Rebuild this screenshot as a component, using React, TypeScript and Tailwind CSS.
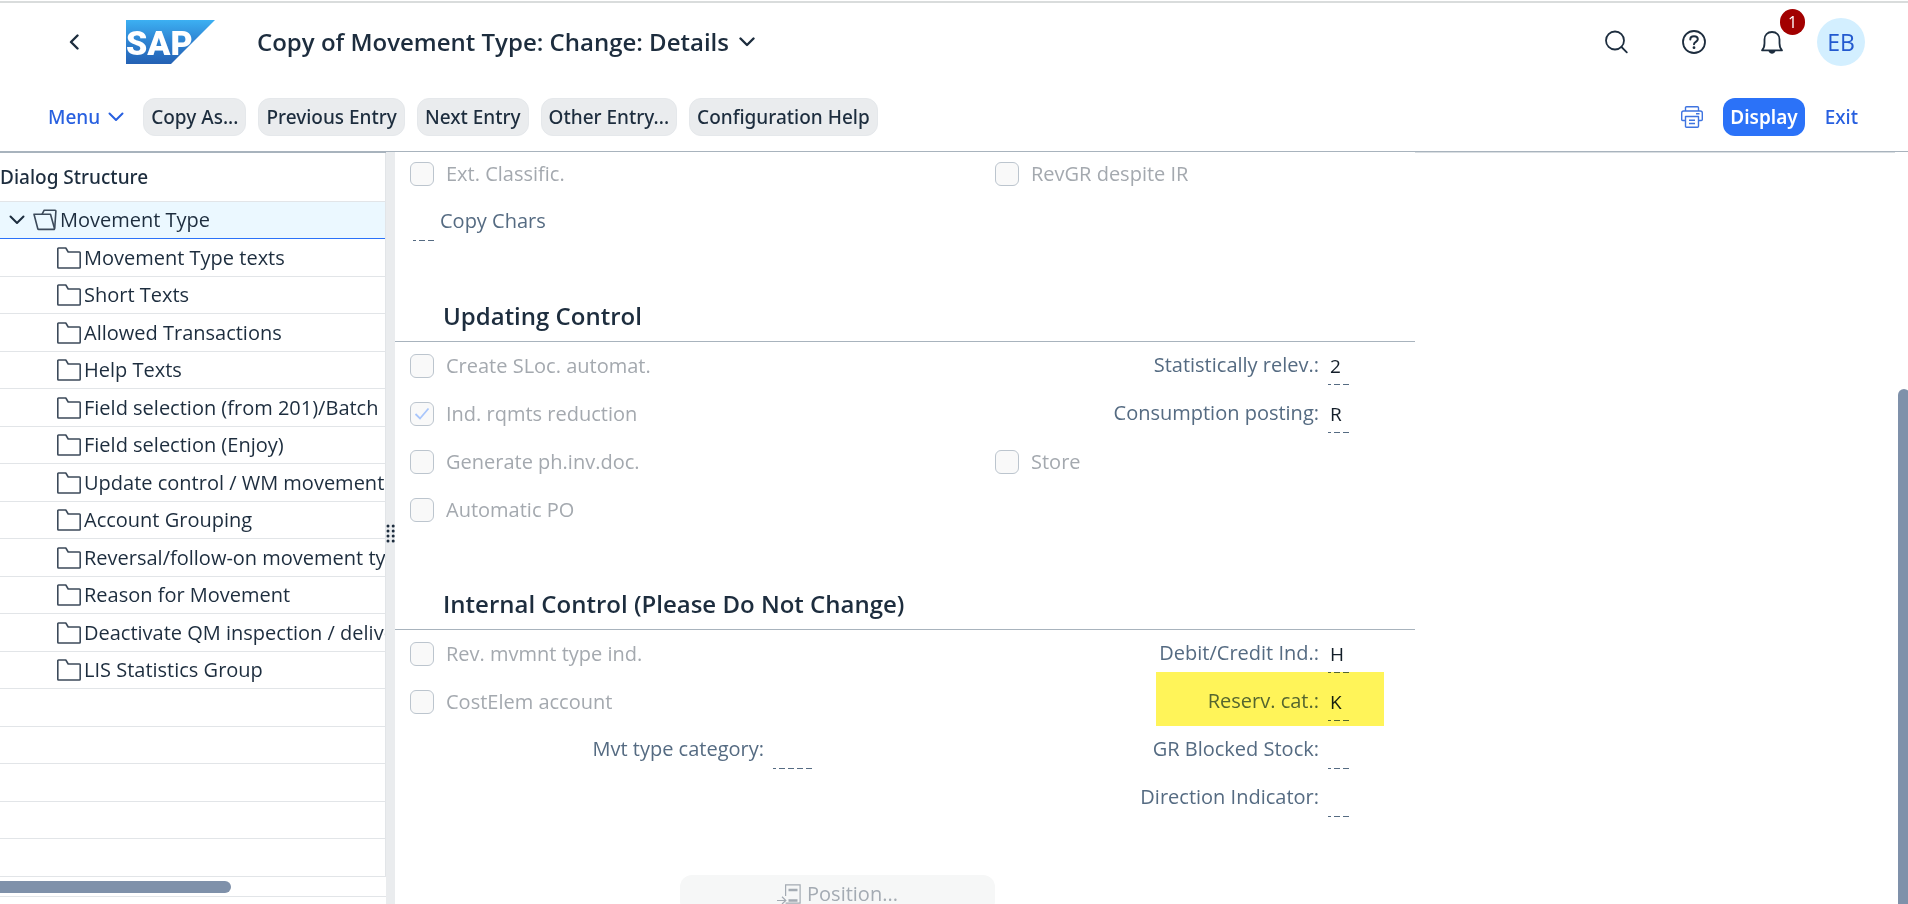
import React, { useState } from 'react';

const TREE_ITEMS = [
  'Movement Type texts',
  'Short Texts',
  'Allowed Transactions',
  'Help Texts',
  'Field selection (from 201)/Batch',
  'Field selection (Enjoy)',
  'Update control / WM movement types',
  'Account Grouping',
  'Reversal/follow-on movement types',
  'Reason for Movement',
  'Deactivate QM inspection / delivery category',
  'LIS Statistics Group',
];

const ACTIONS = ['Copy As...', 'Previous Entry', 'Next Entry', 'Other Entry...', 'Configuration Help'];

function ChevronDown({ className, thick = 2 }: { className: string; thick?: number }) {
  return (
    <svg viewBox="0 0 16 10" className={className} fill="none" stroke="currentColor" strokeWidth={thick} strokeLinecap="round" strokeLinejoin="round">
      <path d="M1.5 1.5 8 8l6.5-6.5" />
    </svg>
  );
}

function SapLogo() {
  return (
    <svg viewBox="0 0 89 44" className="w-[89px] h-11" role="img" aria-label="SAP">
      <defs>
        <linearGradient id="sapBlue" x1="0" y1="0" x2="0" y2="1">
          <stop offset="0" stopColor="#3cb0f2" />
          <stop offset="0.45" stopColor="#2f86d4" />
          <stop offset="1" stopColor="#2461b4" />
        </linearGradient>
      </defs>
      <path d="M0 0h89L45 44H0z" fill="url(#sapBlue)" />
      <text x="0" y="35" fill="#fff" fontFamily="Roboto, sans-serif" fontWeight="900" fontSize="34">SAP</text>
    </svg>
  );
}

function SearchIcon() {
  return (
    <svg viewBox="0 0 24 24" className="w-6 h-6" fill="none" stroke="currentColor" strokeWidth="1.8" strokeLinecap="round">
      <circle cx="11" cy="10.5" r="9" />
      <path d="m17.5 17 5.3 5.3" />
    </svg>
  );
}

function HelpIcon() {
  return (
    <svg viewBox="0 0 24 24" className="w-6 h-6" fill="none" stroke="currentColor" strokeWidth="1.8" strokeLinecap="round" strokeLinejoin="round">
      <circle cx="12" cy="12" r="11" />
      <path d="M8.3 9.4c0-2 1.6-3.2 3.7-3.2s3.8 1.2 3.8 3c0 2.7-3.8 2.5-3.8 5" strokeWidth="2" />
      <circle cx="12" cy="17.7" r="1.4" fill="currentColor" stroke="none" />
    </svg>
  );
}

function BellIcon() {
  return (
    <svg viewBox="0 0 24 24" className="w-6 h-6" fill="none" stroke="currentColor" strokeWidth="1.8" strokeLinejoin="round" strokeLinecap="round">
      <path d="M2 20.3c1.9-1.9 2.5-4 2.5-7V9.5C4.5 5 7.5 2 12 2s7.5 3 7.5 7.5v3.8c0 3 .6 5.1 2.5 7z" />
      <path d="M8.5 21c.7 2 2 2.7 3.5 2.7s2.8-.7 3.5-2.7z" fill="currentColor" stroke="none" />
    </svg>
  );
}

function PrinterIcon() {
  return (
    <svg viewBox="0 0 22 22" className="w-[22px] h-[22px]" fill="none" stroke="currentColor" strokeWidth="1.4" strokeLinejoin="round">
      <path d="M4.5 5V1.7c0-.6.4-1 1-1h11c.6 0 1 .4 1 1V5" />
      <path d="M4.5 14.5H1.7c-.6 0-1-.4-1-1V7c0-1.1.9-2 2-2h16.600c1.1 0 2 .9 2 2v6.5c0 .6-.4 1-1 1h-2.8" />
      <path d="M4.5 10.5h13v9.8c0 .6-.4 1-1 1h-11c-.6 0-1-.4-1-1z" />
      <path d="M8 14.3h6M8 17.5h6M15 7.7h3.5" />
    </svg>
  );
}

function FolderIcon() {
  return (
    <svg viewBox="0 0 24 22" className="w-6 h-[22px] shrink-0 text-[#3c4a5a]" fill="none" stroke="currentColor" strokeWidth="1.6" strokeLinejoin="round">
      <path d="M.8 1.8c0-.4.3-.8.8-.8h7.2l2.4 4h11.2c.4 0 .8.3.8.7v14.6c0 .4-.4.7-.8.7H1.6c-.5 0-.8-.3-.8-.7z" />
    </svg>
  );
}

function OpenFolderIcon() {
  return (
    <svg viewBox="0 0 24 22" className="w-6 h-[22px] shrink-0 text-[#3c4a5a]" fill="none" stroke="currentColor" strokeWidth="1.6" strokeLinejoin="round">
      <path d="M1 5.3h16.5L21.5 19.5c.1.5-.2.9-.7.9H5.7c-.4 0-.8-.3-.9-.7z" />
      <path d="M9 5.3 11.2 1.2h11c.4 0 .7.3.7.7L21.7 19.5" />
    </svg>
  );
}

function PositionIcon() {
  return (
    <svg viewBox="0 0 24 20" className="w-6 h-5" fill="none" stroke="currentColor" strokeWidth="1.2">
      <path d="M8.6 12V.8h14.5v18.4H8.6" />
      <path d="M0 16.5h8.5M5 12.8l3.8 3.7L5 20" />
      <path d="M11.5 6h9M11.5 16.5h9" strokeWidth="2.4" />
    </svg>
  );
}

function CheckField({ id, label, checked = false }: { id: string; label: string; checked?: boolean }) {
  return (
    <div className="flex items-center gap-3">
      <span className="relative flex w-6 h-6">
        <input id={id} type="checkbox" disabled defaultChecked={checked} className="appearance-none w-6 h-6 rounded-md border border-[#bcc5ce] bg-[#f9f9f9]" />
        {checked && (
          <svg viewBox="0 0 24 24" className="absolute inset-0 w-6 h-6 text-[#a9c6fb]" fill="none" stroke="currentColor" strokeWidth="1.8">
            <path d="m5.5 12 4.5 4.5L18.5 6.5" />
          </svg>
        )}
      </span>
      <label htmlFor={id} className="text-[#a4a9af]">{label}</label>
    </div>
  );
}

function CodeInput({ id, value = '', wide = false }: { id: string; value?: string; wide?: boolean }) {
  const width = wide ? 'w-[39px]' : 'w-[21px]';
  return (
    <span className={`${width} flex flex-col`}>
      <input id={id} readOnly defaultValue={value} className="w-full h-[37px] pl-[2px] bg-transparent text-[19px] text-[#131e29] outline-none" />
      <span className="h-px bg-[repeating-linear-gradient(to_right,#556b82_0_3px,transparent_3px_6px,#556b82_6px_9px)]" />
    </span>
  );
}

function TextField({ id, label, value, wide }: { id: string; label: string; value?: string; wide?: boolean }) {
  return (
    <div className="flex items-center justify-end gap-[9px]">
      <label htmlFor={id} className="pb-[2px] text-[#556b82]">{label}</label>
      <CodeInput id={id} value={value} wide={wide} />
    </div>
  );
}

// one 48px line of the form, split in a left and a right half
function FormRow({ left, right }: { left?: React.ReactNode; right?: React.ReactNode }) {
  return (
    <div className="flex h-12 items-center pl-[15px]">
      <div className="w-[585px] shrink-0">{left}</div>
      <div className="w-[354px]">{right}</div>
    </div>
  );
}

function SectionTitle({ children }: { children: React.ReactNode }) {
  return (
    <h2 className="mt-12 h-12 flex items-center pb-1 pl-12 border-b border-[#a8b3bd] text-2xl font-semibold text-[#1d2d3e]">{children}</h2>
  );
}

function Header() {
  return (
    <header className="border-b border-[#a8b3bd]">
      <div className="h-20 border-t-2 border-[#d9dcdc] mt-px flex items-center">
        <button aria-label="Back" className="ml-[68px] w-3">
          <svg viewBox="0 0 12 16" className="w-3 h-4" fill="none" stroke="currentColor" strokeWidth="2.4" strokeLinecap="round" strokeLinejoin="round">
            <path d="M9.5 1.5 3 8l6.5 6.5" />
          </svg>
        </button>
        <a href="#home" className="ml-[46px]"><SapLogo /></a>
        <button className="ml-[42px] flex items-center gap-[10px] text-2xl font-semibold">
          Copy of Movement Type: Change: Details
          <ChevronDown className="w-4 h-[10px]" thick={2.4} />
        </button>
        <div className="ml-auto mr-[43px] flex items-center">
          <button aria-label="Search" className="mr-[54px]"><SearchIcon /></button>
          <button aria-label="Help" className="mr-[54px]"><HelpIcon /></button>
          <button aria-label="Notifications" className="relative mr-[33px]">
            <BellIcon />
            <span className="absolute -top-[21px] left-5 w-[25px] h-[26px] rounded-full bg-[#a20000] text-white text-base leading-[26px]">1</span>
          </button>
          <button className="w-12 h-12 rounded-full bg-[#d3efff] text-[#2259cf] text-[23px]">EB</button>
        </div>
      </div>
      <div className="h-[70px] flex items-center pt-[2px] pl-12 pr-[50px] text-[19px] font-medium font-['Noto_Sans','Open_Sans',sans-serif]">
        <button className="flex items-center gap-2 text-[#2860e0]">
          Menu
          <ChevronDown className="w-4 h-[10px]" />
        </button>
        <div className="ml-[19px] flex gap-3">
          {ACTIONS.map((a) => (
            <button key={a} className="h-[38px] px-[7px] rounded-xl bg-[#eaecee] border border-[#e5e8eb]">{a}</button>
          ))}
        </div>
        <div className="ml-auto flex items-center">
          <button aria-label="Print" className="text-[#3f74e0]"><PrinterIcon /></button>
          <button className="ml-5 h-[38px] px-[7px] rounded-xl bg-[#2b72f8] text-white font-semibold">Display</button>
          <button className="ml-5 text-[#2860e0]">Exit</button>
        </div>
      </div>
    </header>
  );
}

function DialogTree() {
  const [selected, setSelected] = useState('Movement Type');
  return (
    <aside className="w-[386px] shrink-0 flex flex-col overflow-hidden border-t border-[#a8b3bd]">
      <div className="border-r border-[#e2e5e8]">
        <h3 className="h-[49px] flex items-center border-b border-[#e2e5e8] text-[19px] font-medium font-['Noto_Sans','Open_Sans',sans-serif]">Dialog Structure</h3>
        <ul>
          {['Movement Type', ...TREE_ITEMS, '', '', '', '', ''].map((item, i) => (
            <li
              key={i}
              className={`odd:h-[37px] even:h-[38px] overflow-hidden border-b ${item === selected ? 'bg-[#ebf8ff] border-[#2b72f8]' : 'border-[#e2e5e8]'}`}
            >
              {item && (
                <button onClick={() => setSelected(item)} className={`h-full w-full flex items-center whitespace-nowrap ${i === 0 ? 'pl-[9px]' : 'pl-[57px]'}`}>
                  {i === 0 && <ChevronDown className="w-4 h-[10px] mr-2 shrink-0" />}
                  {i === 0 ? <OpenFolderIcon /> : <FolderIcon />}
                  <span className="pl-[3px]">{item}</span>
                </button>
              )}
            </li>
          ))}
        </ul>
      </div>
      <div className="h-5 shrink-0 flex items-center border-b border-[#e2e5e8]">
        <div className="h-3 w-[231px] rounded-r-full bg-[#7f91aa]" />
      </div>
    </aside>
  );
}

function Splitter() {
  return (
    <div className="w-[9px] shrink-0 bg-[#eaecee] flex flex-col items-center justify-center pt-3">
      <svg viewBox="0 0 9 20" className="w-[9px] h-5" fill="#1d2d3e">
        {[2, 7, 12, 17].map((y) => (
          <React.Fragment key={y}>
            <circle cx="2" cy={y} r="1.5" />
            <circle cx="7.2" cy={y} r="1.5" />
          </React.Fragment>
        ))}
      </svg>
    </div>
  );
}

export default function App() {
  return (
    <div className="h-screen flex flex-col overflow-hidden bg-white text-xl text-[#1d2d3e] font-['Open_Sans','Noto_Sans',sans-serif]">
      <Header />
      <div className="flex-1 min-h-0 flex">
        <DialogTree />
        <Splitter />
        <main className="w-[1020px] shrink-0 overflow-hidden">
          <div className="flex h-[46px] items-center pb-[2px] pl-[15px]">
            <div className="w-[585px]"><CheckField id="ext" label="Ext. Classific." /></div>
            <CheckField id="revgr" label="RevGR despite IR" />
          </div>
          <FormRow
            left={
              <div className="flex items-center gap-[6px] pl-[3px]">
                <CodeInput id="chars" />
                <label htmlFor="chars" className="pb-[2px] text-[#556b82]">Copy Chars</label>
              </div>
            }
          />

          <SectionTitle>Updating Control</SectionTitle>
          <FormRow left={<CheckField id="sloc" label="Create SLoc. automat." />} right={<TextField id="stat" label="Statistically relev.:" value="2" />} />
          <FormRow left={<CheckField id="rqmts" label="Ind. rqmts reduction" checked />} right={<TextField id="cons" label="Consumption posting:" value="R" />} />
          <FormRow left={<CheckField id="phinv" label="Generate ph.inv.doc." />} right={<CheckField id="store" label="Store" />} />
          <FormRow left={<CheckField id="autopo" label="Automatic PO" />} />

          <SectionTitle>Internal Control (Please Do Not Change)</SectionTitle>
          <FormRow left={<CheckField id="revmv" label="Rev. mvmnt type ind." />} right={<TextField id="dc" label="Debit/Credit Ind.:" value="H" />} />
          <div className="relative">
            <FormRow left={<CheckField id="cost" label="CostElem account" />} right={<TextField id="reserv" label="Reserv. cat.:" value="K" />} />
            <div className="absolute -top-[6px] right-[31px] w-[228px] h-[54px] bg-[#fff459] mix-blend-multiply pointer-events-none" />
          </div>
          <FormRow
            left={<div className="w-[402px]"><TextField id="mvt" label="Mvt type category:" wide /></div>}
            right={<TextField id="gr" label="GR Blocked Stock:" />}
          />
          <FormRow right={<TextField id="dir" label="Direction Indicator:" />} />
          <button disabled className="mt-[53px] ml-[285px] w-[315px] h-[38px] rounded-xl bg-[#f6f7f7] flex items-center justify-center gap-[6px] text-[#a4abb3]">
            <PositionIcon />
            Position...
          </button>
        </main>
        <div className="flex-1 border-t border-[#d9dee2]" />
        <div className="w-[13px] shrink-0 overflow-hidden pt-[237px] pl-[3px]">
          <div className="h-full w-3 rounded-t-md bg-[#7f91aa]" />
        </div>
      </div>
    </div>
  );
}
